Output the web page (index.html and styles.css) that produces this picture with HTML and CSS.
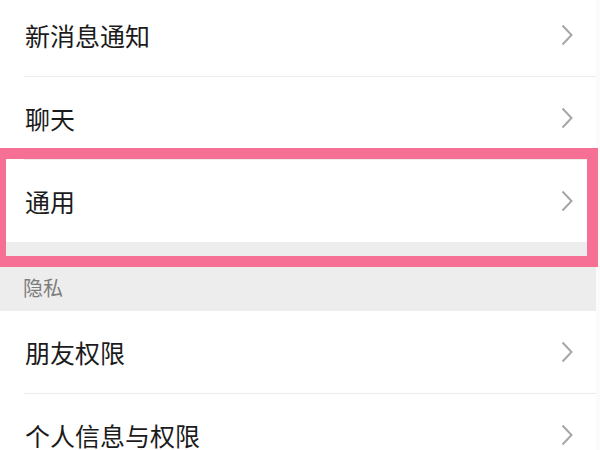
FILE: index.html
```html
<!DOCTYPE html>
<html lang="zh">
<head>
<meta charset="utf-8">
<link rel="stylesheet" href="styles.css">
</head>
<body>
<div class="page">
  <div class="list">
    <div class="row"><span class="label">新消息通知</span><svg class="chev" width="12" height="22" viewBox="0 0 12 22"><polyline points="1.5,1.5 10.5,11 1.5,20.5"/></svg></div>
    <div class="divider"></div>
    <div class="row"><span class="label">聊天</span><svg class="chev" width="12" height="22" viewBox="0 0 12 22"><polyline points="1.5,1.5 10.5,11 1.5,20.5"/></svg></div>
    <div class="divider"></div>
    <div class="row"><span class="label">通用</span><svg class="chev" width="12" height="22" viewBox="0 0 12 22"><polyline points="1.5,1.5 10.5,11 1.5,20.5"/></svg></div>
  </div>
  <div class="section">隐私</div>
  <div class="list">
    <div class="row"><span class="label">朋友权限</span><svg class="chev" width="12" height="22" viewBox="0 0 12 22"><polyline points="1.5,1.5 10.5,11 1.5,20.5"/></svg></div>
    <div class="divider"></div>
    <div class="row"><span class="label">个人信息与权限</span><svg class="chev" width="12" height="22" viewBox="0 0 12 22"><polyline points="1.5,1.5 10.5,11 1.5,20.5"/></svg></div>
  </div>
  <div class="highlight"></div>
</div>
</body>
</html>
```
FILE: styles.css
```css
html, body {
  margin: 0;
  padding: 0;
  background: #fbfbfb;
  overflow: hidden;
  width: 600px;
  height: 450px;
}
.page {
  position: relative;
  width: 596px;
  margin-top: -6px;
  font-family: "Noto Sans CJK SC", "Noto Sans", sans-serif;
}
.list {
  background: #ffffff;
}
.row {
  height: 82px;
  display: flex;
  align-items: center;
  justify-content: space-between;
  padding: 0 23px 0 25px;
}
.label {
  font-size: 25px;
  line-height: 30px;
  color: #1b1b1b;
}
.chev {
  display: block;
  fill: none;
  stroke: #a6a6a6;
  stroke-width: 2;
}
.divider {
  height: 1px;
  margin-left: 24px;
  background: #ececec;
}
.section {
  height: 69px;
  background: #ededed;
  box-sizing: border-box;
  display: flex;
  align-items: flex-end;
  padding: 0 0 13px 23px;
  font-size: 20px;
  line-height: 20px;
  color: #7d7d7d;
}
.highlight {
  position: absolute;
  left: -5px;
  top: 154px;
  width: 603px;
  height: 119px;
  box-sizing: border-box;
  border: 11px solid #f67096;
}
```
